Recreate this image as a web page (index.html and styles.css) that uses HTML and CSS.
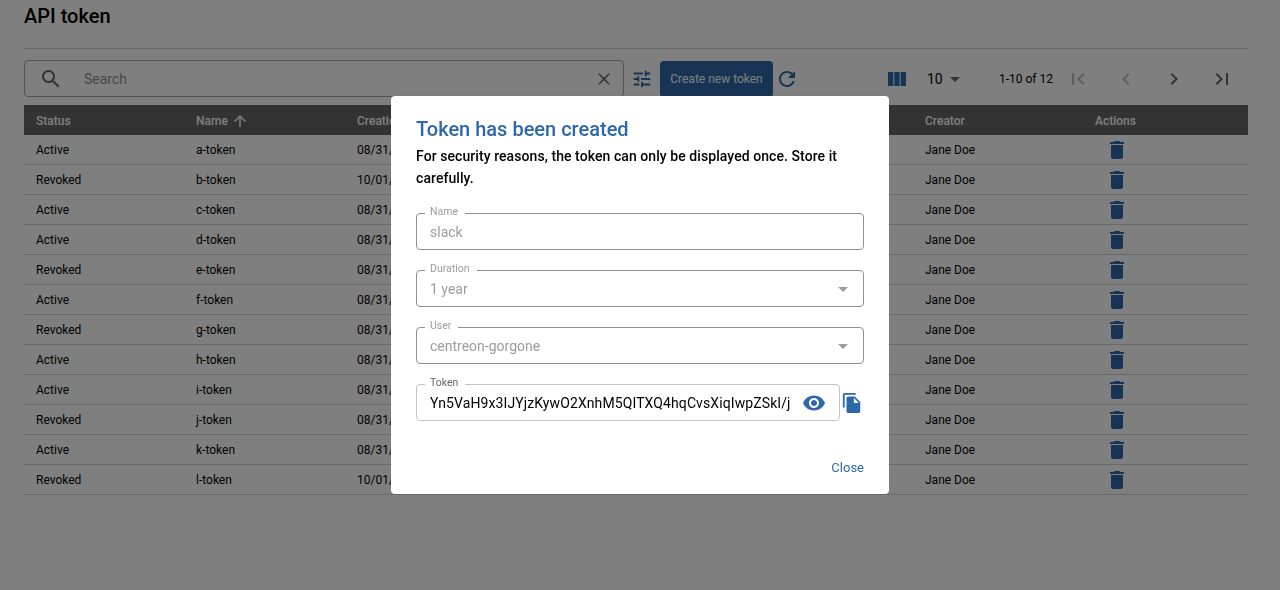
FILE: index.html
```html
<!DOCTYPE html>
<html lang="en">
<head>
<meta charset="utf-8">
<title>API token</title>
<link rel="stylesheet" href="styles.css">
</head>
<body>
<svg class="defs" aria-hidden="true">
  <symbol id="i-del" viewBox="0 0 24 24"><path d="M6 19c0 1.1.9 2 2 2h8c1.1 0 2-.9 2-2V7H6v12zM19 4h-3.5l-1-1h-5l-1 1H5v2h14V4z"/></symbol>
  <symbol id="i-drop" viewBox="0 0 24 24"><path d="m7 10 5 5 5-5z"/></symbol>
</svg>
<main class="page">
  <h1 class="title">API token</h1>
  <div class="toolbar">
    <div class="search">
      <svg class="ic ic-search" viewBox="0 0 24 24"><path d="M15.5 14h-.79l-.28-.27C15.41 12.59 16 11.11 16 9.5 16 5.91 13.09 3 9.5 3S3 5.91 3 9.5 5.91 16 9.5 16c1.61 0 3.09-.59 4.23-1.57l.27.28v.79l5 4.99L20.49 19l-4.99-5zm-6 0C7.01 14 5 11.99 5 9.5S7.01 5 9.5 5 14 7.01 14 9.5 11.99 14 9.5 14z"/></svg>
      <span class="placeholder">Search</span>
      <svg class="ic ic-close" viewBox="0 0 24 24"><path d="M19 6.41 17.59 5 12 10.59 6.41 5 5 6.41 10.59 12 5 17.59 6.41 19 12 13.41 17.59 19 19 17.59 13.41 12z"/></svg>
    </div>
    <svg class="ic ic-tune" viewBox="0 0 24 24"><path d="M3 17v2h6v-2H3zM3 5v2h10V5H3zm10 16v-2h8v-2h-8v-2h-2v6h2zM7 9v2H3v2h4v2h2V9H7zm14 4v-2H11v2h10zm-6-4h2V7h4V5h-4V3h-2v6z"/></svg>
    <button class="create">Create new token</button>
    <svg class="ic ic-refresh" viewBox="0 0 24 24"><path d="M17.65 6.35C16.2 4.9 14.21 4 12 4c-4.42 0-7.99 3.58-7.99 8s3.57 8 7.99 8c3.73 0 6.84-2.55 7.73-6h-2.08c-.82 2.33-3.04 4-5.65 4-3.31 0-6-2.69-6-6s2.69-6 6-6c1.66 0 3.14.69 4.22 1.78L13 11h7V4l-2.35 2.35z"/></svg>
    <svg class="ic ic-cols" viewBox="0 0 24 24"><path d="M14.67 5v14H9.33V5h5.34zm1 14H21V5h-5.33v14zm-7.34 0V5H3v14h5.33z"/></svg>
    <span class="per-page">10</span>
    <svg class="ic ic-perdrop"><use href="#i-drop"/></svg>
    <span class="range">1-10 of 12</span>
    <div class="pager">
      <svg class="ic off" viewBox="0 0 24 24"><path d="M18.41 16.59L13.82 12l4.59-4.59L17 6l-6 6 6 6zM6 6h2v12H6z"/></svg>
      <svg class="ic off" viewBox="0 0 24 24"><path d="M15.41 16.59 10.83 12l4.58-4.59L14 6l-6 6 6 6 1.41-1.41z"/></svg>
      <svg class="ic on" viewBox="0 0 24 24"><path d="M8.59 16.59 13.17 12 8.59 7.41 10 6l6 6-6 6-1.41-1.41z"/></svg>
      <svg class="ic on" viewBox="0 0 24 24"><path d="M5.59 7.41L10.18 12l-4.59 4.59L7 18l6-6-6-6zM16 6h2v12h-2z"/></svg>
    </div>
  </div>
  <div class="table">
    <div class="row head">
      <span>Status</span>
      <span class="sorted">Name <svg class="ic ic-sort" viewBox="0 0 24 24"><path d="M20 12l-1.41-1.41L13 16.17V4h-2v12.17l-5.58-5.59L4 12l8 8 8-8z" transform="rotate(180 12 12)"/></svg></span>
      <span>Creation date</span>
      <span>Creator</span>
      <span>Actions</span>
    </div>
    <div class="row"><span>Active</span><span>a-token</span><span>08/31/2023</span><span>Jane Doe</span><span><svg class="ic ic-del"><use href="#i-del"/></svg></span></div>
    <div class="row"><span>Revoked</span><span>b-token</span><span>10/01/2023</span><span>Jane Doe</span><span><svg class="ic ic-del"><use href="#i-del"/></svg></span></div>
    <div class="row"><span>Active</span><span>c-token</span><span>08/31/2023</span><span>Jane Doe</span><span><svg class="ic ic-del"><use href="#i-del"/></svg></span></div>
    <div class="row"><span>Active</span><span>d-token</span><span>08/31/2023</span><span>Jane Doe</span><span><svg class="ic ic-del"><use href="#i-del"/></svg></span></div>
    <div class="row"><span>Revoked</span><span>e-token</span><span>08/31/2023</span><span>Jane Doe</span><span><svg class="ic ic-del"><use href="#i-del"/></svg></span></div>
    <div class="row"><span>Active</span><span>f-token</span><span>08/31/2023</span><span>Jane Doe</span><span><svg class="ic ic-del"><use href="#i-del"/></svg></span></div>
    <div class="row"><span>Revoked</span><span>g-token</span><span>08/31/2023</span><span>Jane Doe</span><span><svg class="ic ic-del"><use href="#i-del"/></svg></span></div>
    <div class="row"><span>Active</span><span>h-token</span><span>08/31/2023</span><span>Jane Doe</span><span><svg class="ic ic-del"><use href="#i-del"/></svg></span></div>
    <div class="row"><span>Active</span><span>i-token</span><span>08/31/2023</span><span>Jane Doe</span><span><svg class="ic ic-del"><use href="#i-del"/></svg></span></div>
    <div class="row"><span>Revoked</span><span>j-token</span><span>08/31/2023</span><span>Jane Doe</span><span><svg class="ic ic-del"><use href="#i-del"/></svg></span></div>
    <div class="row"><span>Active</span><span>k-token</span><span>08/31/2023</span><span>Jane Doe</span><span><svg class="ic ic-del"><use href="#i-del"/></svg></span></div>
    <div class="row"><span>Revoked</span><span>l-token</span><span>10/01/2023</span><span>Jane Doe</span><span><svg class="ic ic-del"><use href="#i-del"/></svg></span></div>
  </div>
</main>
<div class="backdrop">
  <section class="modal">
    <h2 class="modal-title">Token has been created</h2>
    <p class="modal-text">For security reasons, the token can only be displayed once. Store it carefully.</p>
    <div class="fields">
      <fieldset class="field"><legend>Name</legend><span class="value">slack</span></fieldset>
      <fieldset class="field"><legend>Duration</legend><span class="value">1 year</span><svg class="ic ic-fdrop"><use href="#i-drop"/></svg></fieldset>
      <fieldset class="field"><legend>User</legend><span class="value">centreon-gorgone</span><svg class="ic ic-fdrop"><use href="#i-drop"/></svg></fieldset>
      <div class="token-row">
        <fieldset class="field token"><legend>Token</legend><span class="value">Yn5VaH9x3IJYjzKywO2XnhM5QITXQ4hqCvsXiqIwpZSkI/j</span>
          <svg class="ic ic-eye" viewBox="0 0 24 24"><path d="M12 4.5C7 4.5 2.73 7.61 1 12c1.73 4.39 6 7.5 11 7.5s9.27-3.11 11-7.5c-1.73-4.39-6-7.5-11-7.5zM12 17c-2.76 0-5-2.24-5-5s2.24-5 5-5 5 2.24 5 5-2.24 5-5 5zm0-8c-1.66 0-3 1.34-3 3s1.34 3 3 3 3-1.34 3-3-1.34-3-3-3z"/></svg>
        </fieldset>
        <svg class="ic ic-copy" viewBox="0 0 24 24"><path d="M16 1H4c-1.1 0-2 .9-2 2v14h2V3h12V1zm-1 4 6 6v10c0 1.1-.9 2-2 2H7.99C6.89 23 6 22.1 6 21l.01-14c0-1.1.89-2 1.99-2h7zm-1 7h5.5L14 6.5V12z"/></svg>
      </div>
    </div>
    <div class="modal-actions"><button class="close">Close</button></div>
  </section>
</div>
</body>
</html>
```
FILE: styles.css
```css
* { box-sizing: border-box; }
html, body { margin: 0; height: 100%; }
body { font-family: Roboto, "Liberation Sans", sans-serif; color: #000; background: #fff; overflow: hidden; }
.defs { display: none; }
.ic { display: block; flex: none; width: 24px; height: 24px; fill: #2e68aa; }

.page { padding: 0 32px 0 24px; }
.title { margin: 0; height: 49px; padding-top: 4px; font-size: 20px; line-height: 24px; font-weight: 500; border-bottom: 1px solid #d2d2d2; }

.toolbar { display: flex; align-items: center; height: 37px; margin-top: 11px; }
.search { display: flex; align-items: center; width: 600px; height: 37px; padding: 0 9px 0 14px; border: 1px solid #a8a8a8; border-radius: 4px; }
.ic-search { fill: #666; }
.placeholder { flex: 1; margin-left: 21px; font-size: 14px; color: #8f8f8f; }
.ic-close { width: 20px; height: 20px; fill: #707070; }
.ic-tune { width: 22px; height: 22px; margin-left: 7px; }
.create { width: 113px; height: 36px; margin: 1px 0 0 7px; padding: 0; border: 0; border-radius: 4px; background: #2e68aa; color: #fff; font: 400 12px Roboto, sans-serif; }
.ic-refresh { margin-left: 2px; }
.ic-cols { margin-left: 86px; }
.per-page { margin-left: 18px; width: 18px; font-size: 14px; color: #000; }
.ic-perdrop { margin-left: -2px; fill: #666; }
.range { margin-left: 32px; font-size: 12px; color: #000; white-space: nowrap; }
.pager { display: flex; gap: 24px; margin-left: 13px; }
.pager .off { fill: #bdbdbd; }
.pager .on { fill: #666; }

.table { margin-top: 8px; }
.row { display: grid; grid-template-columns: 160px 161px 568px 170px 1fr; align-items: center; height: 30px; font-size: 12px; border-bottom: 1px solid #d2d2d2; width: 1224px; }
.row > span { padding-left: 12px; white-space: nowrap; }
.head { background: #666; color: #fff; font-weight: 500; border-bottom: 0; }
.head > span { padding-top: 1px; }
.sorted { display: flex; align-items: center; gap: 3px; }
.ic-sort { width: 18px; height: 18px; fill: #fff; }
.ic-del { margin-left: 10px; fill: #2e68aa; }

.backdrop { position: fixed; inset: 0; display: flex; align-items: center; justify-content: center; background: rgba(0,0,0,.5); }
.modal { display: flex; flex-direction: column; width: 498px; height: 398px; padding: 20px 25px 0; background: #fff; border-radius: 4px; box-shadow: 0 0 1px rgba(0,0,0,.2); }
.modal-title { margin: 0; font-size: 20px; line-height: 26px; font-weight: 500; color: #2e68aa; }
.modal-text { margin: 0; padding-top: 3px; font-size: 14px; line-height: 22px; font-weight: 500; letter-spacing: .07px; }
.fields { display: flex; flex-direction: column; gap: 13px; margin-top: 17px; }
.field { display: flex; align-items: center; width: 448px; height: 44px; min-width: 0; margin: 0; padding: 0 13px 5px; border: 1px solid #8f8f8f; border-radius: 4px; }
.field legend { height: 14px; margin-left: -5px; padding: 0 7px 0 5px; font-size: 10.5px; line-height: 12px; color: #9c9c9c; }
.value { flex: 1; font-size: 14px; line-height: 24px; color: #9c9c9c; white-space: nowrap; overflow: hidden; }
.ic-fdrop { margin-right: -5px; fill: #9c9c9c; }
.token-row { display: flex; align-items: center; }
.token { width: 424px; border-color: #c4c4c4; }
.token legend { color: #666; }
.token .value { color: #000; letter-spacing: .1px; }
.ic-eye { margin-left: 10px; fill: #2e68aa; }
.ic-copy { width: 22px; height: 22px; margin: 8px 0 0 1px; fill: #2e68aa; }
.modal-actions { display: flex; justify-content: flex-end; margin-top: 37px; }
.close { padding: 0; border: 0; background: none; color: #2e68aa; font: 400 13px/20px Roboto, sans-serif; }
```
